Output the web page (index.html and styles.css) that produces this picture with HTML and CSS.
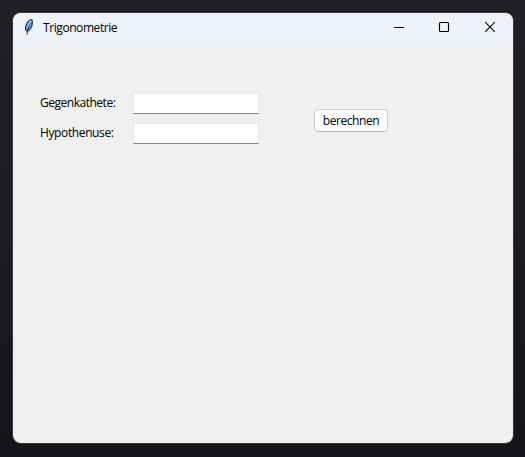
FILE: index.html
```html
<!DOCTYPE html>
<html lang="de">
<head>
<meta charset="utf-8">
<title>Trigonometrie</title>
<link rel="stylesheet" href="styles.css">
</head>
<body>
<main class="window">
  <header class="titlebar">
    <svg class="feather" width="16" height="16" viewBox="0 0 16 16">
      <path d="M6 12.5 4.5 11 4.5 7.5 6 4 8.5 1 11 .5 11.5 2.5 11 7 9.5 10 7.5 12Z" fill="#4d8fdc" stroke="#151a22" stroke-width=".9"/>
      <path d="M10 1.5 7.5 5.5 6.3 10" fill="none" stroke="#a5cdf5" stroke-width="1.1"/>
      <path d="M8.2 7.5 6.5 11 6 15.5" fill="none" stroke="#151a22" stroke-width="1"/>
    </svg>
    <h1 class="title">Trigonometrie</h1>
    <nav class="controls">
      <svg width="45" height="30" viewBox="0 0 45 30"><path d="M16 14.5H26"/></svg>
      <svg width="46" height="30" viewBox="0 0 46 30"><rect x="16.5" y="9.5" width="9" height="9" rx="1"/></svg>
      <svg width="44" height="30" viewBox="0 0 44 30"><path d="M16.2 9.2 25.8 18.8M25.8 9.2 16.2 18.8"/></svg>
    </nav>
  </header>
  <form class="content">
    <div class="fields">
      <label class="row"><span class="label label-a">Gegenkathete:</span><input class="entry" type="text"></label>
      <label class="row"><span class="label label-b">Hypothenuse:</span><input class="entry" type="text"></label>
    </div>
    <button class="button" type="button"><span>berechnen</span></button>
  </form>
</main>
</body>
</html>
```
FILE: styles.css
```css
* { box-sizing: border-box; }
body {
  margin: 0;
  height: 457px;
  padding: 13px 12px 14px 13px;
  overflow: hidden;
  background: linear-gradient(#202124, #1b1c1f 50%, #141518);
  font: 12px/16px "Open Sans", "Noto Sans", sans-serif;
  color: #000;
}
.window {
  width: 500px;
  height: 430px;
  border-radius: 8px;
  overflow: hidden;
  background: #f0f0f0;
  box-shadow: 0 0 0 1px #37383b;
}
.titlebar {
  display: flex;
  align-items: center;
  height: 30px;
  padding-left: 8px;
  background: #eff3f9;
}
.feather { margin-top: -2px; }
.title {
  margin: 0 0 0 6px;
  font-size: 12px;
  font-weight: 400;
  letter-spacing: -0.42px;
}
.controls { display: flex; margin-left: auto; }
.controls svg { display: block; fill: none; stroke: #000; stroke-width: 1.1; }
.content {
  display: flex;
  align-items: flex-start;
  padding: 50px 0 0 27px;
}
.fields { display: flex; flex-direction: column; gap: 9px; }
.row { display: flex; align-items: center; height: 21px; }
.label { width: 93px; padding-bottom: 2px; white-space: nowrap; }
.label-a { letter-spacing: -0.48px; }
.label-b { letter-spacing: -0.38px; }
.entry {
  width: 126px;
  height: 21px;
  padding: 0 3px;
  border: 1px solid #e9e9e9;
  border-bottom-color: #858585;
  border-radius: 0;
  background: #fff;
  outline: none;
  font: inherit;
}
.button {
  width: 74px;
  height: 23px;
  margin: 16px 0 0 55px;
  padding: 0;
  border: 1px solid #d0d0d0;
  border-bottom-color: #bcbcbc;
  border-radius: 4px;
  background: #fdfdfd;
  color: #000;
  font: inherit;
  letter-spacing: -0.42px;
}
```
